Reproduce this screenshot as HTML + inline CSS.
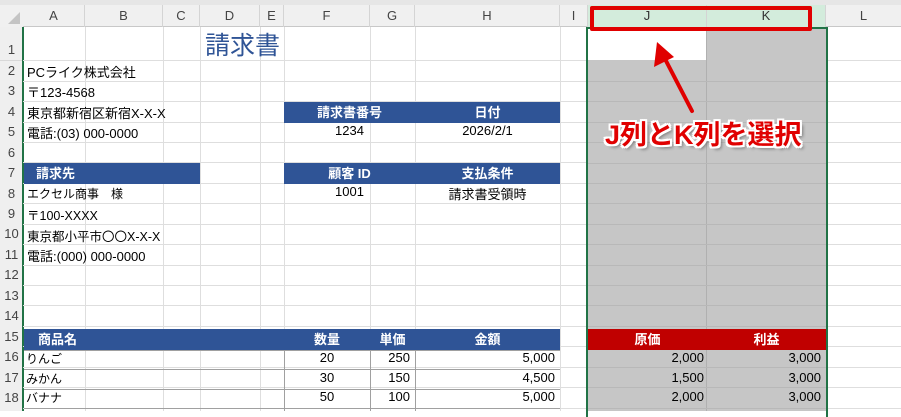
<!DOCTYPE html>
<html><head><meta charset="utf-8"><style>
*{margin:0;padding:0;box-sizing:border-box}
body{width:901px;height:411px;overflow:hidden;background:#fff;position:relative;font-family:"Liberation Sans","Noto Sans CJK JP",sans-serif;font-size:13px;color:#000}
.a{position:absolute}
.top{left:0;top:0;width:901px;height:5px;background:#e6e6e6}
.hdr{left:0;top:5px;width:901px;height:22px;background:#f0f0f0;border-bottom:1px solid #c8c8c8}
.ch{position:absolute;top:5px;height:22px;line-height:22px;text-align:center;color:#444;font-size:13px;border-right:1px solid #d4d4d4}
.r{position:absolute;left:0;width:23px;text-align:center;color:#444;font-size:13px}
.hl{position:absolute;left:23px;width:878px;height:1px;background:#dedede}
.vl{position:absolute;top:27px;width:1px;height:384px;background:#dedede}
.t{position:absolute;white-space:nowrap;margin-top:-2px}
.bl{position:absolute;background:#2f5496;color:#fff;font-weight:bold;text-align:center;height:21px;line-height:21px}
.red{position:absolute;background:#c00000;color:#fff;text-align:center;height:21px;line-height:21px;font-weight:bold}
</style></head><body>
<div class="a top"></div>
<div class="a hdr"></div>
<div class="a" style="left:0;top:5px;width:23px;height:22px;background:#f0f0f0"></div>
<div class="a" style="left:8px;top:12px;width:0;height:0;border-left:12px solid transparent;border-bottom:12px solid #c4c4c4"></div>
<div class="ch" style="left:23px;width:62px">A</div>
<div class="ch" style="left:85px;width:78px">B</div>
<div class="ch" style="left:163px;width:37px">C</div>
<div class="ch" style="left:200px;width:60px">D</div>
<div class="ch" style="left:260px;width:24px">E</div>
<div class="ch" style="left:284px;width:86px">F</div>
<div class="ch" style="left:370px;width:45px">G</div>
<div class="ch" style="left:415px;width:145px">H</div>
<div class="ch" style="left:560px;width:28px">I</div>
<div class="ch" style="left:588px;width:119px;background:#d3ecdc;color:#333">J</div>
<div class="ch" style="left:707px;width:119px;background:#d3ecdc;color:#333">K</div>
<div class="ch" style="left:826px;width:75px;border-right:none">L</div>

<div class="a" style="left:0;top:27px;width:23px;height:384px;background:#efefef"></div>
<div class="a" style="left:22px;top:27px;width:2px;height:384px;background:#217346"></div>
<div class="hl" style="top:60px"></div><div class="hl" style="top:81px"></div><div class="hl" style="top:101px"></div><div class="hl" style="top:122px"></div><div class="hl" style="top:142px"></div><div class="hl" style="top:162px"></div><div class="hl" style="top:183px"></div><div class="hl" style="top:203px"></div><div class="hl" style="top:224px"></div><div class="hl" style="top:244px"></div><div class="hl" style="top:265px"></div><div class="hl" style="top:285px"></div><div class="hl" style="top:305px"></div><div class="hl" style="top:326px"></div><div class="hl" style="top:346px"></div><div class="hl" style="top:367px"></div><div class="hl" style="top:387px"></div><div class="hl" style="top:408px"></div>
<div class="vl" style="left:85px"></div><div class="vl" style="left:163px"></div><div class="vl" style="left:200px"></div><div class="vl" style="left:260px"></div><div class="vl" style="left:284px"></div><div class="vl" style="left:370px"></div><div class="vl" style="left:415px"></div><div class="vl" style="left:560px"></div><div class="vl" style="left:826px"></div>
<div class="r" style="top:42px">1</div>
<div class="r" style="top:63px">2</div><div class="r" style="top:83px">3</div><div class="r" style="top:104px">4</div><div class="r" style="top:124px">5</div><div class="r" style="top:145px">6</div><div class="r" style="top:165px">7</div><div class="r" style="top:186px">8</div><div class="r" style="top:206px">9</div><div class="r" style="top:226px">10</div><div class="r" style="top:247px">11</div><div class="r" style="top:267px">12</div><div class="r" style="top:288px">13</div><div class="r" style="top:308px">14</div><div class="r" style="top:329px">15</div><div class="r" style="top:349px">16</div><div class="r" style="top:370px">17</div><div class="r" style="top:390px">18</div>
<div class="a" style="left:0;top:60px;width:22px;height:1px;background:#d8d8d8"></div>

<div class="a" style="left:588px;top:60px;width:238px;height:351px;background:#c6c6c6"></div>
<div class="a" style="left:707px;top:28px;width:119px;height:33px;background:#c6c6c6"></div>
<div class="a" style="left:706px;top:28px;width:1px;height:383px;background:#b0b0b0"></div>
<div class="a" style="left:588px;top:81px;width:238px;height:1px;background:#b8b8b8;box-shadow:0 20px 0 #b8b8b8,0 41px 0 #b8b8b8,0 61px 0 #b8b8b8,0 82px 0 #b8b8b8,0 102px 0 #b8b8b8,0 122px 0 #b8b8b8,0 143px 0 #b8b8b8,0 163px 0 #b8b8b8,0 184px 0 #b8b8b8,0 204px 0 #b8b8b8,0 224px 0 #b8b8b8,0 245px 0 #b8b8b8,0 265px 0 #b8b8b8,0 286px 0 #b8b8b8,0 306px 0 #b8b8b8,0 327px 0 #b8b8b8"></div>
<div class="a" style="left:586px;top:27px;width:242px;height:390px;border:2px solid #217346;border-bottom:none"></div>

<div class="t" style="left:205px;top:28px;font-size:25px;color:#2f5496">請求書</div>
<div class="t" style="left:27px;top:64px">PCライク株式会社</div>
<div class="t" style="left:27px;top:84px">〒123-4568</div>
<div class="t" style="left:27px;top:105px">東京都新宿区新宿X-X-X</div>
<div class="t" style="left:27px;top:125px">電話:(03) 000-0000</div>
<div class="bl" style="left:284px;top:102px;width:131px">請求書番号</div>
<div class="bl" style="left:415px;top:102px;width:145px">日付</div>
<div class="t" style="left:284px;top:125px;width:131px;text-align:center">1234</div>
<div class="t" style="left:415px;top:125px;width:145px;text-align:center">2026/2/1</div>
<div class="bl" style="left:24px;top:163px;width:176px;text-align:left;padding-left:12px">請求先</div>
<div class="bl" style="left:284px;top:163px;width:131px">顧客 ID</div>
<div class="bl" style="left:415px;top:163px;width:145px">支払条件</div>
<div class="t" style="left:27px;top:187px;font-size:12px">エクセル商事　様</div>
<div class="t" style="left:284px;top:186px;width:131px;text-align:center">1001</div>
<div class="t" style="left:415px;top:186px;width:145px;text-align:center">請求書受領時</div>
<div class="t" style="left:27px;top:207px;font-size:12.5px">〒100-XXXX</div>
<div class="t" style="left:27px;top:228px;font-size:12.5px">東京都小平市〇〇X-X-X</div>
<div class="t" style="left:27px;top:248px">電話:(000) 000-0000</div>

<div class="bl" style="left:24px;top:329px;width:536px"></div>
<div class="t" style="left:38px;top:331px;color:#fff;font-weight:bold">商品名</div>
<div class="t" style="left:284px;top:331px;width:86px;text-align:center;color:#fff;font-weight:bold">数量</div>
<div class="t" style="left:370px;top:331px;width:45px;text-align:center;color:#fff;font-weight:bold">単価</div>
<div class="t" style="left:415px;top:331px;width:145px;text-align:center;color:#fff;font-weight:bold">金額</div>
<div class="red" style="left:588px;top:329px;width:119px">原価</div>
<div class="red" style="left:707px;top:329px;width:119px">利益</div>
<div class="a" style="left:24px;top:350px;width:536px;height:1px;background:#a0a0a0;box-shadow:0 19px 0 #a0a0a0,0 39px 0 #a0a0a0,0 58px 0 #a0a0a0"></div>
<div class="a" style="left:284px;top:350px;width:1px;height:61px;background:#a0a0a0"></div>
<div class="a" style="left:370px;top:350px;width:1px;height:61px;background:#a0a0a0"></div>
<div class="a" style="left:415px;top:350px;width:1px;height:61px;background:#a0a0a0"></div>
<div class="t" style="left:26px;top:352px;font-size:12px">りんご</div>
<div class="t" style="left:26px;top:372px;font-size:12px">みかん</div>
<div class="t" style="left:26px;top:391px;font-size:12px">バナナ</div>
<div class="t" style="left:284px;top:352px;width:86px;text-align:center">20</div>
<div class="t" style="left:284px;top:372px;width:86px;text-align:center">30</div>
<div class="t" style="left:284px;top:391px;width:86px;text-align:center">50</div>
<div class="t" style="left:370px;top:352px;width:40px;text-align:right">250</div>
<div class="t" style="left:370px;top:372px;width:40px;text-align:right">150</div>
<div class="t" style="left:370px;top:391px;width:40px;text-align:right">100</div>
<div class="t" style="left:415px;top:352px;width:140px;text-align:right">5,000</div>
<div class="t" style="left:415px;top:372px;width:140px;text-align:right">4,500</div>
<div class="t" style="left:415px;top:391px;width:140px;text-align:right">5,000</div>
<div class="t" style="left:588px;top:352px;width:116px;text-align:right">2,000</div>
<div class="t" style="left:588px;top:372px;width:116px;text-align:right">1,500</div>
<div class="t" style="left:588px;top:391px;width:116px;text-align:right">2,000</div>
<div class="t" style="left:707px;top:352px;width:114px;text-align:right">3,000</div>
<div class="t" style="left:707px;top:372px;width:114px;text-align:right">3,000</div>
<div class="t" style="left:707px;top:391px;width:114px;text-align:right">3,000</div>

<div class="a" style="left:590px;top:6px;width:222px;height:25px;border:4px solid #e00000;border-radius:2px"></div>
<svg class="a" style="left:640px;top:35px" width="70" height="85" viewBox="0 0 70 85">
<line x1="52" y1="76" x2="24" y2="22" stroke="#e00000" stroke-width="4" stroke-linecap="round"/>
<polygon points="17,7 14,32 34,22" fill="#e00000"/>
</svg>
<div class="a" style="left:605px;top:118px;font-size:27px;line-height:34px;white-space:nowrap;font-weight:bold;color:#e00000;text-shadow:-2px -2px 0 #fff,2px -2px 0 #fff,-2px 2px 0 #fff,2px 2px 0 #fff,0 2px 0 #fff,0 -2px 0 #fff,2px 0 0 #fff,-2px 0 0 #fff,3px 3px 3px rgba(0,0,0,.4)">J列とK列を選択</div>
</body></html>
